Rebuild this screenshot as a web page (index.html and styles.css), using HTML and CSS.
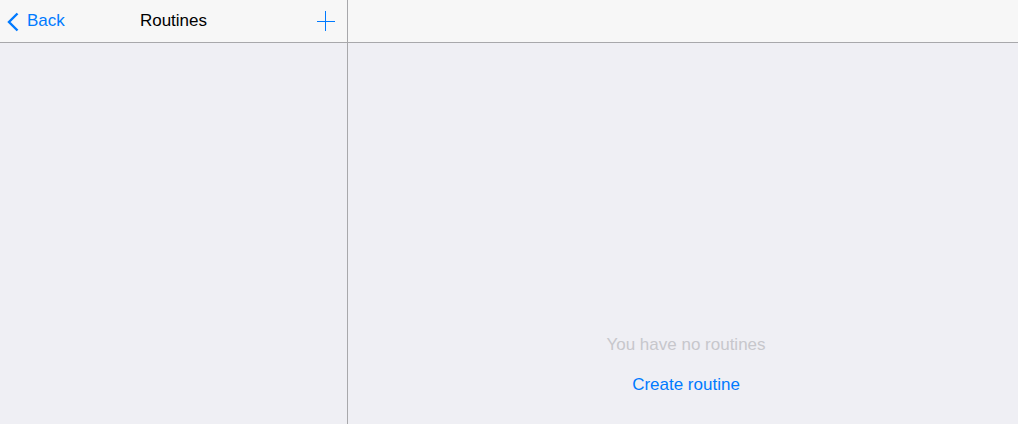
FILE: index.html
```html
<!DOCTYPE html>
<html>
<head>
<meta charset="utf-8">
<link rel="stylesheet" href="styles.css">
</head>
<body>
<div class="app">
  <div class="master">
    <div class="navbar">
      <a class="back">
        <svg class="chev" width="12" height="20" viewBox="0 0 12 20"><path d="M10.5 1.5 L2 10 L10.5 18.5" fill="none" stroke="#007aff" stroke-width="2.4"/></svg>
        <span>Back</span>
      </a>
      <div class="title">Routines</div>
      <svg class="plus" width="18" height="20" viewBox="0 0 18 20"><path d="M8.5 0 V20 M0 10.5 H18" stroke="#007aff" stroke-width="1"/></svg>
    </div>
    <div class="master-body"></div>
  </div>
  <div class="detail">
    <div class="navbar"></div>
    <div class="detail-body">
      <div class="empty">You have no routines</div>
      <a class="create">Create routine</a>
    </div>
  </div>
</div>
</body>
</html>
```
FILE: styles.css
```css
html, body {
  margin: 0;
  padding: 0;
  height: 100%;
}
body {
  font-family: "Liberation Sans", Arial, sans-serif;
  font-size: 17px;
  background: #efeff4;
}
.app {
  display: flex;
  height: 424px;
}
.master {
  width: 347px;
  border-right: 1px solid #a8a8ab;
  display: flex;
  flex-direction: column;
}
.detail {
  flex: 1;
  display: flex;
  flex-direction: column;
}
.navbar {
  height: 42px;
  background: #f7f7f7;
  border-bottom: 1px solid #a8a8ab;
  position: relative;
  display: flex;
  align-items: center;
}
.back {
  display: flex;
  align-items: center;
  color: #007aff;
  padding-left: 7px;
  gap: 8px;
  line-height: 40px;
}
.chev {
  display: block;
  margin-top: 1px;
}
.title {
  position: absolute;
  left: 0;
  right: 0;
  text-align: center;
  line-height: 40px;
  color: #000;
  pointer-events: none;
}
.plus {
  display: block;
  margin-left: auto;
  margin-right: 12px;
}
.master-body, .detail-body {
  flex: 1;
  background: #efeff4;
}
.detail-body {
  display: flex;
  flex-direction: column;
  align-items: center;
  padding-top: 292px;
  padding-left: 6px;
  gap: 20px;
}
.empty {
  color: #c7c7cc;
  line-height: 20px;
}
.create {
  color: #007aff;
  line-height: 20px;
}
```
